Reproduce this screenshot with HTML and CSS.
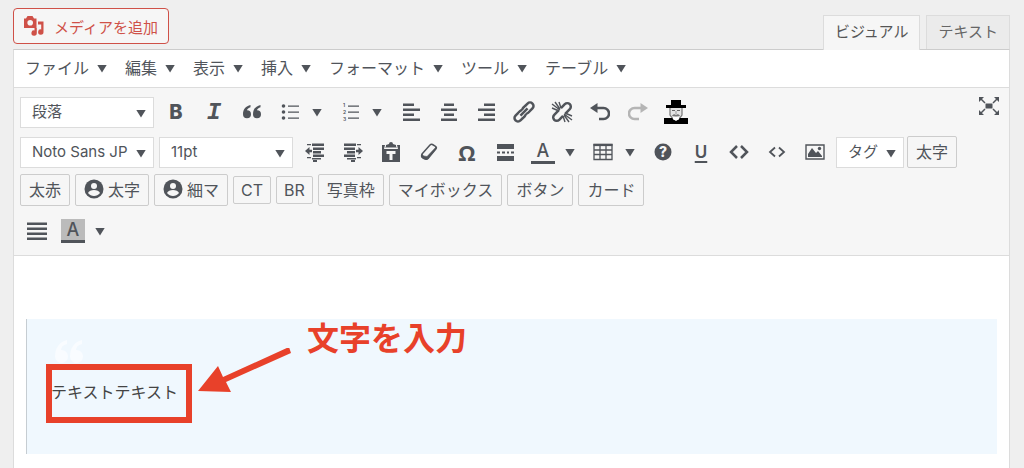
FILE: index.html
```html
<!DOCTYPE html>
<html lang="ja">
<head>
<meta charset="UTF-8" />
<meta name="viewport" content="width=device-width, initial-scale=1" />
<title>投稿の編集</title>
<link rel="stylesheet" href="styles.css">
</head>
<body>
<div class="editor-wrap">
  <div class="editor-tools">
    <button type="button" class="add-media">
      <svg width="20" height="20" viewBox="0 0 20 20" fill="currentColor"><path fill-rule="evenodd" d="M0 2.500h2L3.500 0h5L10 2.500h2.500V12H0zM6.200 4a2.800 2.800 0 1 0 0 5.600a2.800 2.800 0 1 0 0-5.600z"/><path d="M14 5.500h5.500V16a2.700 2.700 0 1 1-2.300-2.600V8.500H14z"/><path d="M10.500 12h2.300v5a2.700 2.700 0 1 1-2.300-2.600z"/></svg>
      メディアを追加
    </button>
    <div class="tabs">
      <button type="button" class="tab active">ビジュアル</button>
      <button type="button" class="tab">テキスト</button>
    </div>
  </div>

  <div class="editor">
    <nav class="menubar">
      <button type="button">ファイル<i class="arrow"></i></button>
      <button type="button">編集<i class="arrow"></i></button>
      <button type="button">表示<i class="arrow"></i></button>
      <button type="button">挿入<i class="arrow"></i></button>
      <button type="button">フォーマット<i class="arrow"></i></button>
      <button type="button">ツール<i class="arrow"></i></button>
      <button type="button">テーブル<i class="arrow"></i></button>
    </nav>

    <div class="toolbar">
      <div class="row">
        <span class="select"><select aria-label="段落"><option>段落</option></select><i class="arrow"></i></span>
        <button type="button" class="icon bold" aria-label="太字">B</button>
        <button type="button" class="icon italic" aria-label="イタリック">I</button>
        <button type="button" class="icon" aria-label="引用">
          <svg width="20" height="20" viewBox="0 0 20 20" fill="currentColor"><path d="M8.500 3C4 4 1 7 1 12.200a4 4 0 1 0 4-4c.3-1.300 1.700-2.500 3.500-3z"/><path d="M18.500 3C14 4 11 7 11 12.200a4 4 0 1 0 4-4c.3-1.300 1.700-2.500 3.500-3z"/></svg>
        </button>
        <button type="button" class="icon menu" aria-label="番号なしリスト">
          <svg width="20" height="20" viewBox="0 0 20 20" fill="currentColor"><circle cx="3.500" cy="4" r="1.800"/><circle cx="3.500" cy="10" r="1.800"/><circle cx="3.500" cy="16" r="1.800"/><path d="M8 3.500h11v1.200H8zM8 9.500h11v1.200H8zM8 15.500h11v1.200H8z"/></svg>
          <i class="arrow"></i>
        </button>
        <button type="button" class="icon menu" aria-label="番号付きリスト">
          <svg width="20" height="20" viewBox="0 0 20 20" fill="currentColor"><text x="3" y="5" class="num">1</text><text x="3" y="12" class="num">2</text><text x="3" y="19" class="num">3</text><path d="M8 3.500h11v1.200H8zM8 9.500h11v1.200H8zM8 15.500h11v1.200H8z"/></svg>
          <i class="arrow"></i>
        </button>
        <button type="button" class="icon" aria-label="左寄せ">
          <svg width="20" height="20" viewBox="0 0 20 20" fill="currentColor"><path d="M3 1.500h11V4H3zM3 6.500h17V9H3zM3 11.500h11V14H3zM3 16.500h17V19H3z"/></svg>
        </button>
        <button type="button" class="icon" aria-label="中央揃え">
          <svg width="20" height="20" viewBox="0 0 20 20" fill="currentColor"><path d="M6 1.500h10V4H6zM3 6.500h16V9H3zM6 11.500h10V14H6zM3 16.500h16V19H3z"/></svg>
        </button>
        <button type="button" class="icon" aria-label="右寄せ">
          <svg width="20" height="20" viewBox="0 0 20 20" fill="currentColor"><path d="M8 1.500h11V4H8zM2 6.500h17V9H2zM8 11.500h11V14H8zM2 16.500h17V19H2z"/></svg>
        </button>
        <button type="button" class="icon" aria-label="リンク">
          <svg width="22" height="22" viewBox="0 0 22 22" fill="none" stroke="currentColor" stroke-width="2.500"><g transform="rotate(-45 11 11)"><rect x="-1" y="7.500" width="13" height="7" rx="3.500"/><rect x="10" y="7.500" width="13" height="7" rx="3.500"/><path d="M6 11h10" stroke="#f6f6f6" stroke-width="4"/><path d="M6 11h10"/></g></svg>
        </button>
        <button type="button" class="icon" aria-label="リンクの削除">
          <svg width="22" height="22" viewBox="0 0 22 22" fill="none" stroke="currentColor" stroke-width="2.500"><g transform="rotate(-45 11 11)"><path d="M10 7.500H3.500a3.500 3.500 0 0 0 0 7H9M12 14.500h6.500a3.500 3.500 0 0 0 0-7H13"/></g><path stroke-width="1.400" d="M1 3l8 6M4 1l5 7M8 1l2 6M1 7l7 3M21 19l-8-6M18 21l-5-7M14 21l-2-6M21 15l-7-3"/></svg>
        </button>
        <button type="button" class="icon" aria-label="取り消し">
          <svg width="20" height="20" viewBox="0 0 20 20" fill="none" stroke="currentColor" stroke-width="2.500"><path d="M5 6h8.500a5.500 5.500 0 0 1 0 11H9"/><path d="M0 6l7.500-5v10z" fill="currentColor" stroke="none"/></svg>
        </button>
        <button type="button" class="icon" aria-label="やり直し" disabled>
          <svg width="20" height="20" viewBox="0 0 20 20" fill="none" stroke="currentColor" stroke-width="2.500"><path d="M15 6H6.500a5.500 5.500 0 0 0 0 11H11"/><path d="M20 6l-7.500-5v10z" fill="currentColor" stroke="none"/></svg>
        </button>
        <button type="button" class="icon" aria-label="プロフィール">
          <svg width="24" height="24" viewBox="0 0 24 24"><path d="M6 8h12v8l-3 5H9l-3-5z" fill="#e4e4e4"/><path d="M6 8v7l3 4M18 8v7l-3 4" fill="none" stroke="#777" stroke-width="1.200"/><path d="M0 18h8l2 2h4l2-2h8v6H0zM7 0h10v5h5v3H2V5h5z" fill="#000"/><path d="M8 10h3v1H8zM13 10h3v1h-3z" fill="#666"/><path d="M11.500 11h1v3h-1z" fill="#999"/><path d="M8 16c1-2 3-2 4-1 1-1 3-1 4 1l-4 .5z" fill="#777"/><path d="M9 17h6v2l-3 2-3-2z" fill="#fff"/></svg>
        </button>
        <button type="button" class="fullscreen" aria-label="フルスクリーン">
          <svg width="20" height="18" viewBox="0 0 20 18" fill="currentColor"><path d="M6.500 6.500h7v5h-7z"/><path d="M0 0h5L0 5zM20 0v5l-5-5zM0 18v-5l5 5zM20 18h-5l5-5z"/><path d="M2 2l4 4M18 2l-4 4M2 16l4-4M18 16l-4-4" stroke="currentColor" stroke-width="1.500"/></svg>
        </button>
      </div>

      <div class="row">
        <span class="select"><select aria-label="フォント"><option>Noto Sans JP</option></select><i class="arrow"></i></span>
        <span class="select"><select aria-label="フォントサイズ"><option>11pt</option></select><i class="arrow"></i></span>
        <button type="button" class="icon" aria-label="インデントを減らす">
          <svg width="20" height="20" viewBox="0 0 20 20" fill="currentColor"><path d="M7 1.500h12V4H7zM8 5.500h11V8H8zM8 9h8v2.500H8zM8 12.500h11V15H8zM7 16h9v1.500H7zM8 18h4v2H8zM2 2h4v1.200H2zM2 15h4v1.200H2z"/><path d="M0 9l4.500-4v2.800H7v2.400H4.500V13z"/></svg>
        </button>
        <button type="button" class="icon" aria-label="インデントを増やす">
          <svg width="20" height="20" viewBox="0 0 20 20" fill="currentColor"><path d="M1 1.500h12V4H1zM1 5.500h11V8H1zM4 9h8v2.500H4zM1 12.500h11V15H1zM4 16h9v1.500H4zM8 18h4v2H8zM14 2h4v1.200h-4zM14 15h4v1.200h-4z"/><path d="M20 9l-4.500-4v2.800H13v2.400h2.500V13z"/></svg>
        </button>
        <button type="button" class="icon" aria-label="テキストとしてペースト">
          <svg width="20" height="20" viewBox="0 0 20 20" fill="currentColor"><path d="M5 4.500V3l3-1a2 2 0 0 1 4 0l3 1v1.500l1 1H4z"/><path d="M1 3h3L3 7h14l-1-4h3v17H1z"/><path d="M5.500 9h9v3h-3v6h-3v-6h-3z" fill="#f6f6f6"/></svg>
        </button>
        <button type="button" class="icon" aria-label="書式設定をクリア">
          <svg width="20" height="20" viewBox="0 0 20 20" fill="none" stroke="currentColor" stroke-width="1.500" stroke-linejoin="round"><path d="M3 12l8-9q1-1 2.500-.5l3 1.800q1.500 1 .5 2.500l-8 9.700q-1 1-2.500.5l-3-1.500q-1.500-1-.5-3.500z"/><path d="M3 12q1 2.500 5 2.500L17 5v2l-9 10.500-3.500-.5-2-2z" fill="currentColor" stroke-width=".5"/></svg>
        </button>
        <button type="button" class="icon omega" aria-label="特殊文字">Ω</button>
        <button type="button" class="icon" aria-label="続きを読む">
          <svg width="20" height="20" viewBox="0 0 20 20" fill="currentColor"><path d="M2 2h17v5H2zM2 14h17v5H2zM2 9.500h3v2H2zM7 9.500h3v2H7zM12 9.500h2v2h-2zM16 9.500h3v2h-3z"/></svg>
        </button>
        <button type="button" class="icon menu" aria-label="テキスト色"><span class="color">A</span><i class="arrow"></i></button>
        <button type="button" class="icon menu" aria-label="表">
          <svg width="20" height="20" viewBox="0 0 20 20" fill="none" stroke="currentColor"><path d="M1 2.500h18v15H1zM1 8h18M1 12.500h18M7 3v14M13 3v14" stroke-width="1.300"/><path d="M.5 3h19" stroke-width="2.200"/></svg>
          <i class="arrow"></i>
        </button>
        <button type="button" class="icon" aria-label="キーボードショートカット">
          <svg width="20" height="20" viewBox="0 0 20 20" fill="currentColor"><circle cx="10" cy="10" r="8.500"/><text x="10" y="15" class="question">?</text></svg>
        </button>
        <button type="button" class="icon underline" aria-label="下線">U</button>
        <button type="button" class="icon" aria-label="コード">
          <svg width="20" height="20" viewBox="0 0 20 20" fill="none" stroke="currentColor" stroke-width="2.500"><path d="M8 4l-6 6 6 6M12 4l6 6-6 6"/></svg>
        </button>
        <button type="button" class="icon" aria-label="ソースコード">
          <svg width="20" height="20" viewBox="0 0 20 20" fill="none" stroke="currentColor" stroke-width="1.800"><path d="M8 5.500L3 10l5 4.500M12 5.500l5 4.500-5 4.500"/></svg>
        </button>
        <button type="button" class="icon" aria-label="画像">
          <svg width="20" height="20" viewBox="0 0 20 20" fill="currentColor"><path d="M1 3h18v14H1z" fill="none" stroke="currentColor" stroke-width="1.400"/><path d="M3 15v-3l4-6 4 5 2-2 4 5v1z"/><circle cx="14.500" cy="6.500" r="1.700"/></svg>
        </button>
        <span class="select select-tag"><select aria-label="タグ"><option>タグ</option></select><i class="arrow"></i></span>
        <button type="button" class="btn">太字</button>
      </div>

      <div class="row row-buttons">
        <button type="button" class="btn">太赤</button>
        <button type="button" class="btn"><svg width="20" height="20" viewBox="0 0 20 20"><circle cx="10" cy="10" r="9.500" fill="currentColor"/><circle cx="10" cy="7" r="3" fill="#f6f6f6"/><path d="M4 14c1.500-4 10.500-4 12 0-3 4-9 4-12 0z" fill="#f6f6f6"/></svg>太字</button>
        <button type="button" class="btn"><svg width="20" height="20" viewBox="0 0 20 20"><circle cx="10" cy="10" r="9.500" fill="currentColor"/><circle cx="10" cy="7" r="3" fill="#f6f6f6"/><path d="M4 14c1.500-4 10.500-4 12 0-3 4-9 4-12 0z" fill="#f6f6f6"/></svg>細マ</button>
        <button type="button" class="btn btn-small">CT</button>
        <button type="button" class="btn btn-small">BR</button>
        <button type="button" class="btn">写真枠</button>
        <button type="button" class="btn">マイボックス</button>
        <button type="button" class="btn">ボタン</button>
        <button type="button" class="btn">カード</button>
      </div>

      <div class="row row-last">
        <button type="button" class="icon" aria-label="両端揃え">
          <svg width="20" height="20" viewBox="0 0 20 20" fill="currentColor"><path d="M0 1.500h20V4H0zM0 6.500h20V9H0zM0 11.500h20V14H0zM0 16.500h20V19H0z"/></svg>
        </button>
        <button type="button" class="icon menu" aria-label="背景色"><span class="color color-bg">A</span><i class="arrow"></i></button>
      </div>
    </div>

    <div class="content">
      <blockquote>
        <svg class="quote-mark" width="28" height="26" viewBox="0 0 28 26" fill="#f9fcff"><path d="M12 0C4 2 0 8 0 17a6.500 6.500 0 1 0 6-7c0-3 2-5 6-6z"/><path d="M27 0C19 2 15 8 15 17a6.500 6.500 0 1 0 6-7c0-3 2-5 6-6z"/></svg>
        <p>テキストテキスト</p>
        <div class="frame"></div>
        <svg class="pointer" width="94" height="48" viewBox="0 0 94 48" fill="#e8412a"><path d="M0 43L20 18l5 11L91 -1l2 6L28 34l5 10z"/></svg>
        <strong class="note">文字を入力</strong>
      </blockquote>
    </div>
  </div>
</div>
</body>
</html>
```

FILE: styles.css
```css
* {
  box-sizing: border-box;
}
body {
  margin: 0;
  background: #efefef;
  color: #50545a;
  font-family: Inter, 'Noto Sans CJK JP', sans-serif;
  font-size: 16px;
}
button, select {
  font: inherit;
  color: inherit;
  background: none;
  border: none;
  margin: 0;
  padding: 0;
}
svg {
  display: block;
  flex: none;
}
.editor-wrap {
  display: flex;
  flex-direction: column;
  min-height: 100vh;
  padding: 8px 14px 0 13px;
}
.editor-tools {
  display: flex;
  justify-content: space-between;
  align-items: flex-start;
  height: 41px;
}
.add-media {
  display: flex;
  align-items: center;
  gap: 10px;
  height: 36px;
  padding: 0 10px;
  font-size: 15px;
  color: #cf5148;
  background: #f6f6f6;
  border: 1px solid #cf5148;
  border-radius: 4px;
}
.tabs {
  display: flex;
  gap: 6px;
  align-self: flex-end;
}
.tab {
  height: 34px;
  padding: 0 11px 5px;
  font-size: 15px;
  color: #666;
  background: #ebebeb;
  border: 1px solid #dcdcdc;
  border-bottom: none;
}
.tab.active {
  height: 35px;
  margin-bottom: -1px;
  position: relative;
  color: #555;
  background: #f6f6f6;
}
.editor {
  flex: 1;
  background: #fff;
  border: 1px solid #dcdcdc;
  border-top-color: #ccc;
  border-bottom: none;
}
.arrow {
  display: block;
  width: 10px;
  height: 8px;
  margin-top: 1px;
  background: #50545a;
  clip-path: polygon(0 0, 100% 0, 50% 100%);
}
.menubar {
  display: flex;
  gap: 18px;
  height: 38px;
  padding: 0 11px 3px;
  border-bottom: 1px solid #dcdcdc;
}
.menubar button {
  display: flex;
  align-items: center;
  gap: 8px;
}
.menubar .arrow {
  margin-top: 3px;
}

/* toolbar */
.toolbar {
  padding: 4px 6px;
  background: #f6f6f6;
  border-bottom: 1px solid #dcdcdc;
}
.row {
  display: flex;
  align-items: center;
  height: 40px;
}
.row-buttons {
  gap: 5px;
  height: 36px;
  margin-bottom: 3px;
}
.row-last .icon:first-child {
  width: 34px;
}
.select {
  position: relative;
  width: 134px;
  margin-right: 3px;
}
.select + .select {
  margin-left: 2px;
}
.select select {
  display: block;
  width: 100%;
  height: 31px;
  padding: 0 0 2px 11px;
  font-size: 15px;
  appearance: none;
  background: #fff;
  border: 1px solid #dcdcdc;
  border-radius: 0;
}
.select .arrow {
  position: absolute;
  right: 8px;
  top: 12px;
  pointer-events: none;
}
.select-tag {
  width: 68px;
  margin-left: 2px;
}
.icon {
  display: flex;
  align-items: center;
  justify-content: center;
  width: 38px;
  height: 38px;
}
.icon:disabled {
  color: #b5b5b5;
}
.icon.menu {
  justify-content: flex-start;
  gap: 12px;
  width: 60px;
  padding-left: 9px;
}
.bold {
  font-size: 20px;
  font-weight: 800;
}
.italic {
  font: italic bold 24px 'Liberation Mono', monospace;
}
.omega {
  font: bold 22px 'Open Sans', sans-serif;
}
.underline {
  font-size: 17px;
  font-weight: 600;
  text-decoration: underline;
  text-decoration-thickness: 2px;
  text-underline-offset: 3px;
}
.num {
  font-size: 5px;
  font-weight: 600;
}
.question {
  font-size: 14px;
  font-weight: 800;
  text-anchor: middle;
  fill: #f6f6f6;
}
.color {
  width: 24px;
  height: 24px;
  margin: 0 -2px;
  font-size: 18px;
  font-weight: 500;
  line-height: 21px;
  text-align: center;
  border-bottom: 3px solid #50545a;
}
.color-bg {
  background: #bbb;
}
.fullscreen {
  align-self: flex-start;
  margin: 5px 4px 0 auto;
}
.btn {
  display: flex;
  align-items: center;
  gap: 4px;
  height: 32px;
  padding: 0 8px 2px;
  white-space: nowrap;
  border: 1px solid #ccc;
  border-radius: 2px;
}
.btn-small {
  height: 28px;
  padding: 0 7px;
}

/* editing area */
.content {
  padding: 63px 12px 14px;
}
blockquote {
  position: relative;
  height: 135px;
  margin: 0;
  padding: 61px 24px 0;
  color: #444;
  background: #f0f8fe;
  border-left: 1px solid #c6cdd2;
}
blockquote p {
  margin: 0;
  line-height: 24px;
}
.quote-mark {
  position: absolute;
  left: 28px;
  top: 21px;
}
.frame {
  position: absolute;
  left: 19px;
  top: 45px;
  width: 146px;
  height: 59px;
  border: 6px solid #e8412a;
}
.pointer {
  position: absolute;
  left: 171px;
  top: 29px;
}
.note {
  position: absolute;
  left: 280px;
  top: 1px;
  font-size: 32px;
  line-height: 38px;
  color: #e8412a;
}
```
